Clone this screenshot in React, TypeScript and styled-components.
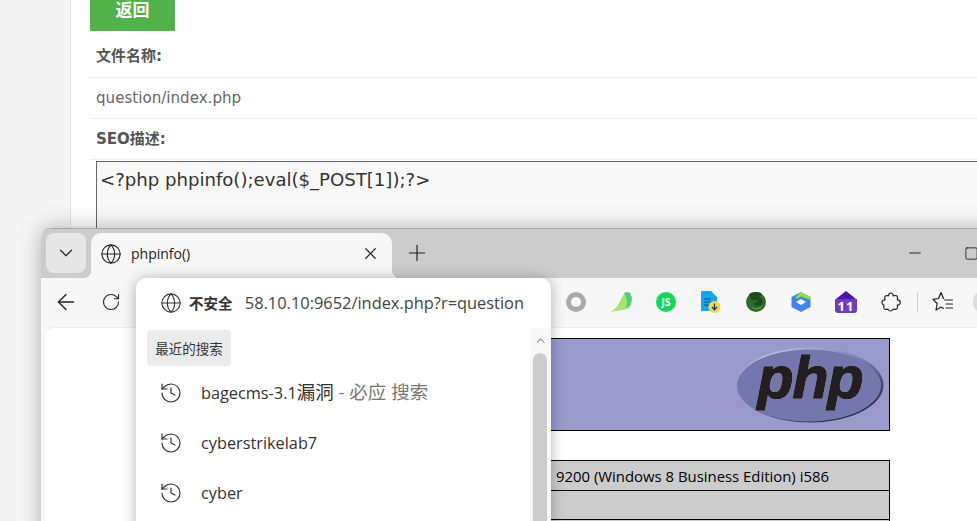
import { ArrowLeft, ChevronDown, ChevronUp, Globe, History, Minus, Plus, RotateCw, Square, X } from "lucide-react";
import styled, { createGlobalStyle } from "styled-components";

const UI_FONT = `"Open Sans", "Noto Sans", "Noto Sans CJK SC", sans-serif`;
const PAGE_FONT = `"DejaVu Sans", "Noto Sans CJK SC", sans-serif`;

const recentSearches = [
  { id: 1, text: "bagecms-3.1", cjk: "漏洞", suffix: " - 必应 搜索" },
  { id: 2, text: "cyberstrikelab7" },
  { id: 3, text: "cyber" },
];

export default function App() {
  return (
    <Page>
      <GlobalStyle />
      <SideBar />
      <Main>
        <BackButton>返回</BackButton>
        <FieldRow $height={47}>
          <FieldLabel>文件名称:</FieldLabel>
        </FieldRow>
        <FieldRow $height={41}>
          <FieldValue>question/index.php</FieldValue>
        </FieldRow>
        <FieldRow $height={41} $lift={4}>
          <FieldLabel>SEO描述:</FieldLabel>
        </FieldRow>
        <CodeBox>{"<?php phpinfo();eval($_POST[1]);?>"}</CodeBox>
      </Main>

      <BrowserWindow>
        <TabStrip>
          <TabMenu>
            <ChevronDown size={22} strokeWidth={1.3} />
          </TabMenu>
          <Tab>
            <Globe size={22} strokeWidth={1.2} />
            <TabTitle>phpinfo()</TabTitle>
            <X size={19} strokeWidth={1.5} />
          </Tab>
          <NewTab>
            <Plus size={26} strokeWidth={1.1} />
          </NewTab>
          <WindowControls>
            <WindowControl>
              <Minus size={18} strokeWidth={1.2} color="#111" />
            </WindowControl>
            <WindowControl>
              <Square size={15} strokeWidth={1.3} color="#111" />
            </WindowControl>
            <WindowControl>
              <X size={16} strokeWidth={1.2} />
            </WindowControl>
          </WindowControls>
        </TabStrip>

        <Toolbar>
          <NavButton>
            <ArrowLeft size={26} strokeWidth={1.2} />
          </NavButton>
          <NavButton>
            <RotateCw size={20} strokeWidth={1.3} />
          </NavButton>
          <Extensions>
            <ExtSlot>
              <svg width="22" height="22" viewBox="0 0 22 22">
                <circle cx="11" cy="11" r="7.5" fill="none" stroke="#a9a9a9" strokeWidth="5" />
              </svg>
            </ExtSlot>
            <ExtSlot>
              <svg width="24" height="24" viewBox="0 0 24 24">
                <path d="M1 22C6 20 9 16 12 9c2-4 4-7 6-7l3 1 2 5-1 6c-1 4-5 6-9 6-4 1-9 1-12 2z" fill="#a6e36a" />
                <path d="M15 3l3-1 3 1 2 5-1 6c-1 2-3 4-5 4 2-5 1-10-2-15z" fill="#4fd07f" />
              </svg>
            </ExtSlot>
            <ExtSlot>
              <JsBadge>JS</JsBadge>
            </ExtSlot>
            <ExtSlot>
              <svg width="24" height="24" viewBox="0 0 24 24">
                <path d="M2 1h10l6 6v14H2z" fill="#12a5f0" />
                <path d="M5 9h7M5 12h7M5 15h5" stroke="#174a8c" strokeWidth="1.2" />
                <circle cx="15.500" cy="17" r="6" fill="#f8d63e" />
                <path d="M15.500 13.500v6M13 17l2.500 2.700L18 17" fill="none" stroke="#1d3f78" strokeWidth="1.3" />
              </svg>
            </ExtSlot>
            <ExtSlot>
              <svg width="22" height="22" viewBox="0 0 22 22">
                <circle cx="11" cy="11" r="10" fill="#2f6b2a" />
                <path d="M4 3c3-2 9-3 13 0l-3 3c3 1 4 4 3 7-3 3-7 2-9-1 3 0 5-1 5-3-3 1-7 0-8-3z" fill="#1f4a1d" />
                <path d="M6 15c4 3 8 3 12-1-2 5-9 6-12 1z" fill="#58a04c" />
              </svg>
            </ExtSlot>
            <ExtSlot>
              <svg width="22" height="22" viewBox="0 0 22 22">
                <path d="M11 1l9.500 5v10L11 21l-9.500-5V6z" fill="#3f83f0" />
                <path d="M6 6l5-5 9.500 5v3L11 5.500 6 8z" fill="#8fe43a" />
                <path d="M11 8l5 3-5 3-5-3z" fill="#fff" />
              </svg>
            </ExtSlot>
            <ExtSlot>
              <HouseBadge>
                <svg width="20" height="9" viewBox="0 0 20 9">
                  <path d="M10 0L20 8H0z" fill="#4b13ae" />
                </svg>
                <HouseCount>11</HouseCount>
              </HouseBadge>
            </ExtSlot>
            <ExtSlot>
              <svg width="20" height="20" viewBox="0 0 20 20" fill="none" stroke="#222" strokeWidth="1.200" strokeLinejoin="round">
                <path d="M9.500 1c1.700 0 2.800 1.300 2.700 2.800 1.300-.3 3.200-.4 3.900.3.700.8.500 2.500.2 3.800 1.500-.2 3 .9 3 2.500 0 1.700-1.500 2.800-3 2.600.3 1.300.4 3.100-.3 3.800-.8.800-2.700.6-4 .3-.4 1.100-1.300 1.900-2.500 1.900s-2.100-.8-2.500-1.900c-1.300.3-3.100.4-3.800-.3-.7-.8-.6-2.600-.3-3.800C2.600 13.200 1 12.300 1 10.500c0-1.700 1.500-2.700 3-2.500-.3-1.300-.5-3 .2-3.800.8-.8 2.400-.7 3.400-.4-.1-1.500.9-2.800 1.900-2.800z" />
              </svg>
            </ExtSlot>
            <ToolbarDivider />
            <ExtSlot>
              <svg width="22" height="22" viewBox="0 0 22 22" fill="none" stroke="#222" strokeWidth="1.200" strokeLinejoin="round" strokeLinecap="round">
                <path d="M11.500 7.500L9 1.500 6.500 7.500 1 8.300l4.200 4.200L4 19l5-3 2.500 1.500" />
                <path d="M12.500 9h8M14 13h6.500M14 17h6.500" />
              </svg>
            </ExtSlot>
            <Avatar />
          </Extensions>
        </Toolbar>

        <Viewport>
          <PhpBanner>
            <svg width="148" height="76" viewBox="0 0 148 76" overflow="visible">
              <defs>
                <linearGradient id="rim" x1="0.100" y1="0" x2="0.900" y2="1">
                  <stop offset="0" stopColor="#c9cbe6" />
                  <stop offset="0.500" stopColor="#7176ad" />
                  <stop offset="1" stopColor="#15152a" />
                </linearGradient>
              </defs>
              <ellipse cx="74" cy="38" rx="73.500" ry="37.500" fill="url(#rim)" />
              <ellipse cx="73" cy="38.500" rx="72" ry="36" fill="#7377ad" />
              <LogoText x="74" y="51" textAnchor="middle">
                php
              </LogoText>
            </svg>
          </PhpBanner>
          <InfoTable>
            <InfoRow $height={29}>
              <InfoText>9200 (Windows 8 Business Edition) i586</InfoText>
            </InfoRow>
            <InfoRow $height={28} />
            <InfoRow $height={29} />
          </InfoTable>
        </Viewport>

        <OmniPopup>
          <OmniHead>
            <Globe size={22} strokeWidth={1.2} color="#333" />
            <NotSecure>不安全</NotSecure>
            <UrlText>58.10.10:9652/index.php?r=question</UrlText>
          </OmniHead>
          <OmniBody>
            <SuggestList>
              <RecentChip>最近的搜索</RecentChip>
              {recentSearches.map((item) => {
                return (
                  <SuggestRow key={item.id}>
                    <History size={24} strokeWidth={1.2} color="#333" />
                    <SuggestText>
                      {item.text}
                      {item.cjk && <CjkPart>{item.cjk}</CjkPart>}
                      {item.suffix && <SuggestSuffix>{item.suffix}</SuggestSuffix>}
                    </SuggestText>
                  </SuggestRow>
                );
              })}
            </SuggestList>
            <ScrollTrack>
              <ScrollArrow>
                <ChevronUp size={13} strokeWidth={1.5} color="#333" />
              </ScrollArrow>
              <ScrollThumb />
            </ScrollTrack>
          </OmniBody>
        </OmniPopup>
      </BrowserWindow>
    </Page>
  );
}

const GlobalStyle = createGlobalStyle`
  html, body {
    margin: 0;
    padding: 0;
    background: #fff;
  }
`;

const Page = styled.div`
  position: relative;
  display: flex;
  width: 977px;
  height: 521px;
  overflow: hidden;
  font-family: ${PAGE_FONT};
`;

const SideBar = styled.div`
  flex: 0 0 70px;
  background: #f5f5f5;
  border-right: 1px solid #e2e2e2;
`;

const Main = styled.div`
  flex: 1;
  min-width: 0;
  padding-left: 19px;
  display: flex;
  flex-direction: column;
`;

const BackButton = styled.div`
  width: 85px;
  height: 31px;
  padding-bottom: 14px;
  box-sizing: border-box;
  background: #51b14a;
  color: #fff;
  font-size: 17px;
  font-weight: 700;
  display: flex;
  align-items: center;
  justify-content: center;
`;

const FieldRow = styled.div<{ $height: number; $lift?: number }>`
  height: ${(p) => p.$height}px;
  box-sizing: border-box;
  padding: 0 0 ${(p) => p.$lift || 0}px 6px;
  border-bottom: 1px solid #eee;
  display: flex;
  align-items: center;
`;

const FieldLabel = styled.div`
  font-size: 15px;
  font-weight: 700;
  color: #555;
`;

const FieldValue = styled.div`
  font-size: 15.100px;
  color: #666;
`;

const CodeBox = styled.div`
  margin: 1px 0 0 6px;
  width: 1000px;
  height: 200px;
  box-sizing: border-box;
  padding: 6px 3px;
  border: 1px solid #666;
  background: #f8f8f8;
  font-size: 18.100px;
  line-height: 24px;
  color: #333;
  white-space: nowrap;
`;

const BrowserWindow = styled.div`
  position: absolute;
  left: 41px;
  top: 228px;
  width: 1016px;
  height: 320px;
  border-radius: 10px 10px 0 0;
  border-top: 1px solid #a8a8a8;
  box-shadow: 0 0 22px rgba(0, 0, 0, 0.28);
  background: #f7f7f7;
  font-family: ${UI_FONT};
  color: #222;
`;

const TabStrip = styled.div`
  height: 49px;
  box-sizing: border-box;
  padding: 4px 0 0 5px;
  background: #ccc;
  border-radius: 10px 10px 0 0;
  display: flex;
  align-items: flex-start;
`;

const TabMenu = styled.div`
  width: 40px;
  height: 40px;
  border-radius: 8px;
  background: #e6e6e6;
  display: flex;
  align-items: center;
  justify-content: center;
`;

const Tab = styled.div`
  position: relative;
  margin-left: 5px;
  width: 301px;
  height: 45px;
  box-sizing: border-box;
  padding: 0 12px 4px 9px;
  border-radius: 10px 10px 0 0;
  background: #f7f7f7;
  display: flex;
  align-items: center;
  gap: 9px;

  &::before,
  &::after {
    content: "";
    position: absolute;
    bottom: 0;
    width: 8px;
    height: 8px;
  }
  &::before {
    left: -8px;
    background: radial-gradient(circle at 0 0, #ccc 8px, #f7f7f7 8.500px);
  }
  &::after {
    right: -8px;
    background: radial-gradient(circle at 100% 0, #ccc 8px, #f7f7f7 8.500px);
  }
`;

const TabTitle = styled.div`
  flex: 1;
  font-size: 14px;
`;

const NewTab = styled.div`
  margin-left: 10px;
  width: 30px;
  height: 40px;
  display: flex;
  align-items: center;
  justify-content: center;
`;

const WindowControls = styled.div`
  margin-left: auto;
  display: flex;
`;

const WindowControl = styled.div`
  width: 57px;
  height: 40px;
  display: flex;
  align-items: center;
  justify-content: center;
`;

const Toolbar = styled.div`
  height: 49px;
  box-sizing: border-box;
  padding: 0 0 1px 10px;
  display: flex;
  align-items: center;
  gap: 15px;
`;

const NavButton = styled.div`
  width: 30px;
  height: 30px;
  display: flex;
  align-items: center;
  justify-content: center;
`;

const Extensions = styled.div`
  margin-left: 420px;
  display: flex;
  align-items: center;
  gap: 15px;
`;

const ExtSlot = styled.div`
  width: 30px;
  height: 30px;
  display: flex;
  align-items: center;
  justify-content: center;
`;

const JsBadge = styled.div`
  width: 20px;
  height: 20px;
  border-radius: 50%;
  background: #12d856;
  color: #fff;
  font: 700 10px "Open Sans", sans-serif;
  display: flex;
  align-items: center;
  justify-content: center;
`;

const HouseBadge = styled.div`
  display: flex;
  flex-direction: column;
  align-items: center;
`;

const HouseCount = styled.div`
  width: 22px;
  height: 14px;
  margin-top: -1px;
  border-radius: 0 0 3px 3px;
  background: #6d3fc0;
  color: #fff;
  font: 700 13px/14px "Open Sans", sans-serif;
  letter-spacing: 1px;
  text-align: center;
`;

const ToolbarDivider = styled.div`
  width: 1px;
  height: 20px;
  margin: 0 -5px 0 -4px;
  background: #cfcfcf;
`;

const Avatar = styled.div`
  flex: none;
  width: 26px;
  height: 26px;
  border-radius: 50%;
  background: #dcdcd8;
`;

const Viewport = styled.div`
  margin-left: 5px;
  height: 222px;
  box-sizing: border-box;
  padding: 10px 0 0 494px;
  background: #fff;
  border-top: 1px solid #ececec;
  border-top-left-radius: 8px;
`;

const PhpBanner = styled.div`
  width: 350px;
  height: 93px;
  box-sizing: border-box;
  padding-right: 5px;
  border: 1px solid #000;
  background: #9999cc;
  display: flex;
  align-items: center;
  justify-content: flex-end;
`;

const LogoText = styled.text`
  font-family: "Liberation Sans", sans-serif;
  font-weight: 700;
  font-style: italic;
  font-size: 59px;
  letter-spacing: -1px;
  fill: #231f20;
  stroke: #231f20;
  stroke-width: 1.600px;
  filter: drop-shadow(0 0 0.700px #ecedf6);
`;

const InfoTable = styled.div`
  width: 350px;
  margin-top: 29px;
  box-sizing: border-box;
  border: 1px solid #000;
  border-bottom: 0;
`;

const InfoRow = styled.div<{ $height: number }>`
  height: ${(p) => p.$height}px;
  box-sizing: content-box;
  padding-left: 15px;
  background: #ccc;
  border-bottom: 1px solid #000;
  display: flex;
  align-items: center;
`;

const InfoText = styled.div`
  font-size: 14.900px;
  color: #000;
  white-space: nowrap;
`;

const OmniPopup = styled.div`
  position: absolute;
  left: 95px;
  top: 49px;
  width: 415px;
  height: 260px;
  border-radius: 10px 10px 0 0;
  background: #fff;
  box-shadow: 0 1px 14px rgba(0, 0, 0, 0.3);
`;

const OmniHead = styled.div`
  height: 50px;
  box-sizing: border-box;
  padding: 0 27px 1px 24px;
  display: flex;
  align-items: center;
`;

const NotSecure = styled.div`
  margin-left: 7px;
  width: 54px;
  flex: none;
  font-size: 14.500px;
  font-weight: 700;
  color: #333;
`;

const UrlText = styled.div`
  margin-left: auto;
  flex: none;
  font-size: 16.400px;
  color: #444;
  white-space: nowrap;
`;

const OmniBody = styled.div`
  display: flex;
  justify-content: space-between;
  height: 210px;
`;

const SuggestList = styled.div`
  padding: 2px 0 0 11px;
  display: flex;
  flex-direction: column;
  align-items: flex-start;
`;

const RecentChip = styled.div`
  width: 84px;
  height: 36px;
  margin-bottom: 2px;
  border-radius: 4px;
  background: #ebebeb;
  color: #333;
  font-size: 13.500px;
  display: flex;
  align-items: center;
  justify-content: center;
`;

const SuggestRow = styled.div`
  height: 50px;
  padding-left: 12px;
  display: flex;
  align-items: center;
  gap: 18px;
`;

const SuggestText = styled.div`
  font-size: 16.300px;
  line-height: 24px;
  color: #333;
  white-space: pre;
`;

const CjkPart = styled.span`
  font-size: 18.500px;
  line-height: 20px;
`;

const SuggestSuffix = styled.span`
  font-size: 18.500px;
  line-height: 20px;
  color: #777;
`;

const ScrollTrack = styled.div`
  width: 21px;
  padding-left: 3px;
  box-sizing: border-box;
  background: #f8f8f8;
  display: flex;
  flex-direction: column;
`;

const ScrollArrow = styled.div`
  width: 14px;
  height: 25px;
  display: flex;
  align-items: center;
  justify-content: center;
`;

const ScrollThumb = styled.div`
  flex: 1;
  width: 14px;
  border-radius: 7px 7px 0 0;
  background: #ccc;
`;
